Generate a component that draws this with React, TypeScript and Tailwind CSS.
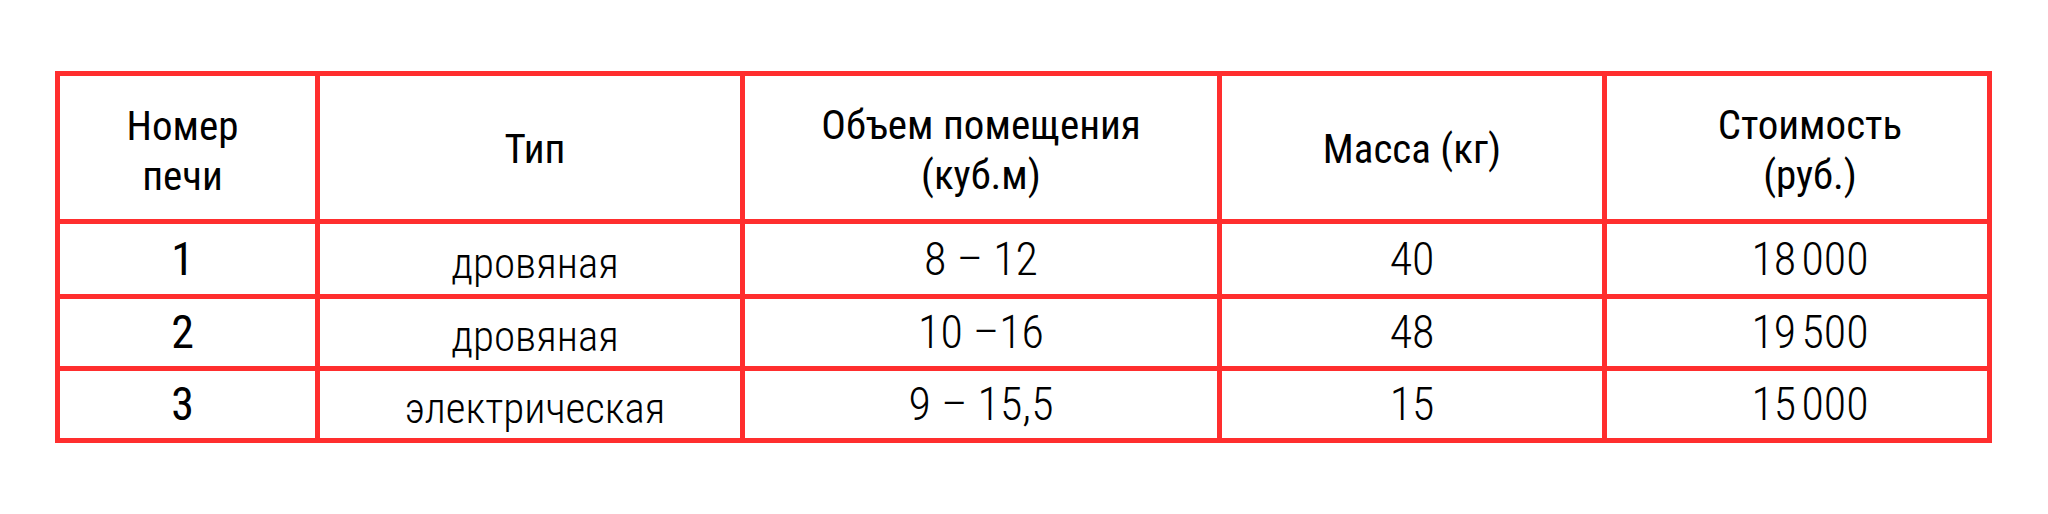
import React from 'react';

type Row = {
  num: string;
  kind: string;
  volume: string;
  mass: string;
  price: string;
};

const rows: Row[] = [
  { num: '1', kind: 'дровяная', volume: '8 – 12', mass: '40', price: '18\u202F000' },
  { num: '2', kind: 'дровяная', volume: '10 –16', mass: '48', price: '19\u202F500' },
  { num: '3', kind: 'электрическая', volume: '9 – 15,5', mass: '15', price: '15\u202F000' },
];

const font = { fontFamily: '"Roboto Condensed", "Liberation Sans Narrow", Roboto, sans-serif' };

const App: React.FC = () => {
  return (
    <div className="h-[514px] w-[2048px] bg-white pl-[55px] pt-[71px]" style={font}>
      <div className="grid h-[372px] w-[1937px] grid-cols-[255px_420px_472px_380px_380px] grid-rows-[143px_70px_67px_67px] gap-[5px] bg-[#ff2e2e] p-[5px] text-black">
        {/* ---- header ---- */}
        <div className="flex items-center justify-center bg-white pr-[10px] pt-[6px] text-center text-[41px] leading-[50px]">
          Номер
          <br />
          печи
        </div>
        <div className="flex items-center justify-center bg-white pl-[10px] pt-[4px] text-[41px]">Тип</div>
        <div className="flex items-center justify-center bg-white pt-[4px] text-center text-[41px] leading-[50px]">
          Объем помещения
          <br />
          (куб.м)
        </div>
        <div className="flex items-center justify-center bg-white pt-[4px] text-[41px]">Масса (кг)</div>
        <div className="flex items-center justify-center bg-white pl-[26px] pt-[4px] text-center text-[41px] leading-[50px]">
          Стоимость
          <br />
          (руб.)
        </div>

        {/* ---- rows ---- */}
        {rows.map((r) => (
          <React.Fragment key={r.num}>
            <div className="flex items-center justify-center bg-white pr-[10px] text-[46px]">{r.num}</div>
            <div className="flex items-center justify-center bg-white pl-[10px] pt-[8px] text-[43px] font-light">{r.kind}</div>
            <div className="flex items-center justify-center bg-white text-[46px] font-light">{r.volume}</div>
            <div className="flex items-center justify-center bg-white text-[46px] font-light">{r.mass}</div>
            <div className="flex items-center justify-center bg-white pl-[26px] text-[46px] font-light">{r.price}</div>
          </React.Fragment>
        ))}
      </div>
    </div>
  );
};

export default App;
